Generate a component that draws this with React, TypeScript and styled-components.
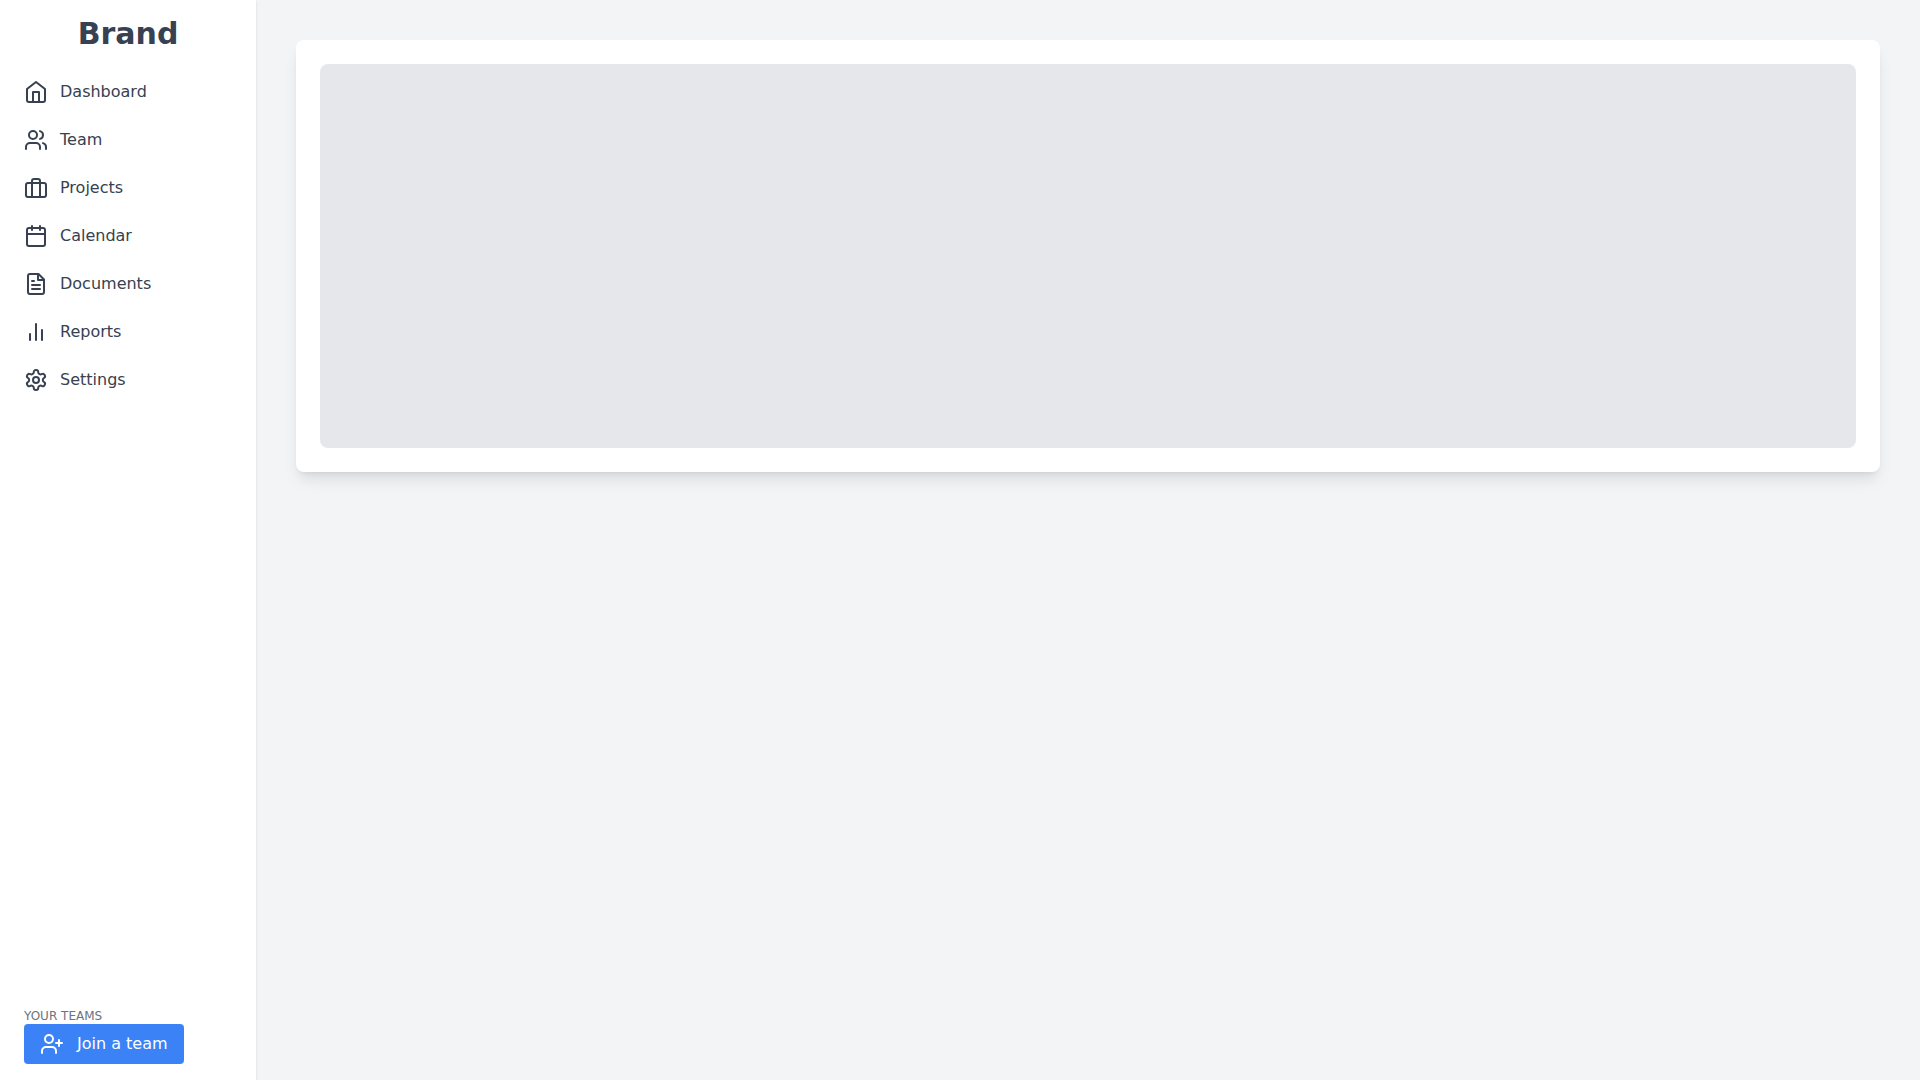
import React from "react";
import styled, { createGlobalStyle } from "styled-components";

const GlobalStyle = createGlobalStyle`
    html, body {
        margin: 0;
        padding: 0;
        height: 100%;
    }
    body {
        font-family: "DejaVu Sans", sans-serif;
        background: #f3f4f6;
    }
`;

const Icon = ({ children }: { children: React.ReactNode }) => (
    <svg width="24" height="24" viewBox="0 0 24 24" fill="none" stroke="currentColor" strokeWidth="2" strokeLinecap="round" strokeLinejoin="round">
        {children}
    </svg>
);

const HomeIcon = () => (
    <Icon>
        <path d="m3 9 9-7 9 7v11a2 2 0 0 1-2 2H5a2 2 0 0 1-2-2z" />
        <polyline points="9 22 9 12 15 12 15 22" />
    </Icon>
);

const TeamIcon = () => (
    <Icon>
        <path d="M16 21v-2a4 4 0 0 0-4-4H6a4 4 0 0 0-4 4v2" />
        <circle cx="9" cy="7" r="4" />
        <path d="M22 21v-2a4 4 0 0 0-3-3.87" />
        <path d="M16 3.13a4 4 0 0 1 0 7.75" />
    </Icon>
);

const ProjectsIcon = () => (
    <Icon>
        <rect x="2" y="7" width="20" height="14" rx="2" ry="2" />
        <path d="M16 21V5a2 2 0 0 0-2-2h-4a2 2 0 0 0-2 2v16" />
    </Icon>
);

const CalendarIcon = () => (
    <Icon>
        <rect x="3" y="4" width="18" height="18" rx="2" ry="2" />
        <line x1="16" y1="2" x2="16" y2="6" />
        <line x1="8" y1="2" x2="8" y2="6" />
        <line x1="3" y1="10" x2="21" y2="10" />
    </Icon>
);

const DocumentIcon = () => (
    <Icon>
        <path d="M14.5 2H6a2 2 0 0 0-2 2v16a2 2 0 0 0 2 2h12a2 2 0 0 0 2-2V7.5L14.5 2z" />
        <polyline points="14 2 14 8 20 8" />
        <line x1="16" y1="13" x2="8" y2="13" />
        <line x1="16" y1="17" x2="8" y2="17" />
        <line x1="10" y1="9" x2="8" y2="9" />
    </Icon>
);

const ReportsIcon = () => (
    <Icon>
        <line x1="18" y1="20" x2="18" y2="10" />
        <line x1="12" y1="20" x2="12" y2="4" />
        <line x1="6" y1="20" x2="6" y2="14" />
    </Icon>
);

const SettingsIcon = () => (
    <Icon>
        <path d="M12.22 2h-.44a2 2 0 0 0-2 2v.18a2 2 0 0 1-1 1.73l-.43.25a2 2 0 0 1-2 0l-.15-.08a2 2 0 0 0-2.73.73l-.22.38a2 2 0 0 0 .73 2.73l.15.1a2 2 0 0 1 1 1.72v.51a2 2 0 0 1-1 1.74l-.15.09a2 2 0 0 0-.73 2.73l.22.38a2 2 0 0 0 2.73.73l.15-.08a2 2 0 0 1 2 0l.43.25a2 2 0 0 1 1 1.73V20a2 2 0 0 0 2 2h.44a2 2 0 0 0 2-2v-.18a2 2 0 0 1 1-1.73l.43-.25a2 2 0 0 1 2 0l.15.08a2 2 0 0 0 2.73-.73l.22-.39a2 2 0 0 0-.73-2.73l-.15-.08a2 2 0 0 1-1-1.74v-.5a2 2 0 0 1 1-1.74l.15-.09a2 2 0 0 0 .73-2.73l-.22-.38a2 2 0 0 0-2.73-.73l-.15.08a2 2 0 0 1-2 0l-.43-.25a2 2 0 0 1-1-1.73V4a2 2 0 0 0-2-2z" />
        <circle cx="12" cy="12" r="3" />
    </Icon>
);

const JoinIcon = () => (
    <Icon>
        <path d="M16 21v-2a4 4 0 0 0-4-4H6a4 4 0 0 0-4 4v2" />
        <circle cx="9" cy="7" r="4" />
        <line x1="19" y1="8" x2="19" y2="14" />
        <line x1="22" y1="11" x2="16" y2="11" />
    </Icon>
);

const navItems = [
    { label: "Dashboard", icon: <HomeIcon /> },
    { label: "Team", icon: <TeamIcon /> },
    { label: "Projects", icon: <ProjectsIcon /> },
    { label: "Calendar", icon: <CalendarIcon /> },
    { label: "Documents", icon: <DocumentIcon /> },
    { label: "Reports", icon: <ReportsIcon /> },
    { label: "Settings", icon: <SettingsIcon /> },
];

const App = () => {
    return (
        <Layout>
            <GlobalStyle />
            <Sidebar>
                <Brand>Brand</Brand>
                <Nav>
                    {navItems.map(({ label, icon }) => (
                        <NavLink href="#" key={label}>
                            {icon}
                            <span>{label}</span>
                        </NavLink>
                    ))}
                </Nav>
                <Footer>
                    <TeamsLabel>Your teams</TeamsLabel>
                    <JoinButton>
                        <JoinIcon />
                        <span>Join a team</span>
                    </JoinButton>
                </Footer>
            </Sidebar>
            <Main>
                <Card>
                    <Placeholder />
                </Card>
            </Main>
        </Layout>
    );
};

export default App;

const Layout = styled.div`
    display: flex;
    height: 100vh;
    overflow: hidden;
`;

const Sidebar = styled.aside`
    flex: 0 0 256px;
    box-sizing: border-box;
    display: flex;
    flex-direction: column;
    padding: 16px 0;
    background: #fff;
    box-shadow: 0 1px 3px 0 rgba(0, 0, 0, 0.1), 0 1px 2px -1px rgba(0, 0, 0, 0.1);
`;

const Brand = styled.h1`
    margin: 0 0 16px;
    font-size: 30px;
    line-height: 36px;
    font-weight: 700;
    text-align: center;
    color: #374151;
`;

const Nav = styled.nav`
    display: flex;
    flex-direction: column;
    flex: 1;
`;

const NavLink = styled.a`
    display: flex;
    align-items: center;
    gap: 12px;
    padding: 12px 24px;
    font-size: 16px;
    line-height: 24px;
    color: #374151;
    text-decoration: none;
`;

const Footer = styled.div`
    padding: 0 24px;
`;

const TeamsLabel = styled.div`
    font-size: 12px;
    line-height: 16px;
    text-transform: uppercase;
    color: #6b7280;
`;

const JoinButton = styled.button`
    display: flex;
    align-items: center;
    gap: 13px;
    height: 40px;
    padding: 0 16px;
    border: 0;
    border-radius: 4px;
    background: #3b82f6;
    color: #fff;
    font-family: inherit;
    font-size: 16px;
    line-height: 24px;
`;

const Main = styled.main`
    flex: 1;
    padding: 40px;
`;

const Card = styled.section`
    padding: 24px;
    border-radius: 8px;
    background: #fff;
    box-shadow: 0 10px 15px -3px rgba(0, 0, 0, 0.1), 0 4px 6px -4px rgba(0, 0, 0, 0.1);
`;

const Placeholder = styled.div`
    height: 384px;
    border-radius: 8px;
    background: #e5e7eb;
`;
